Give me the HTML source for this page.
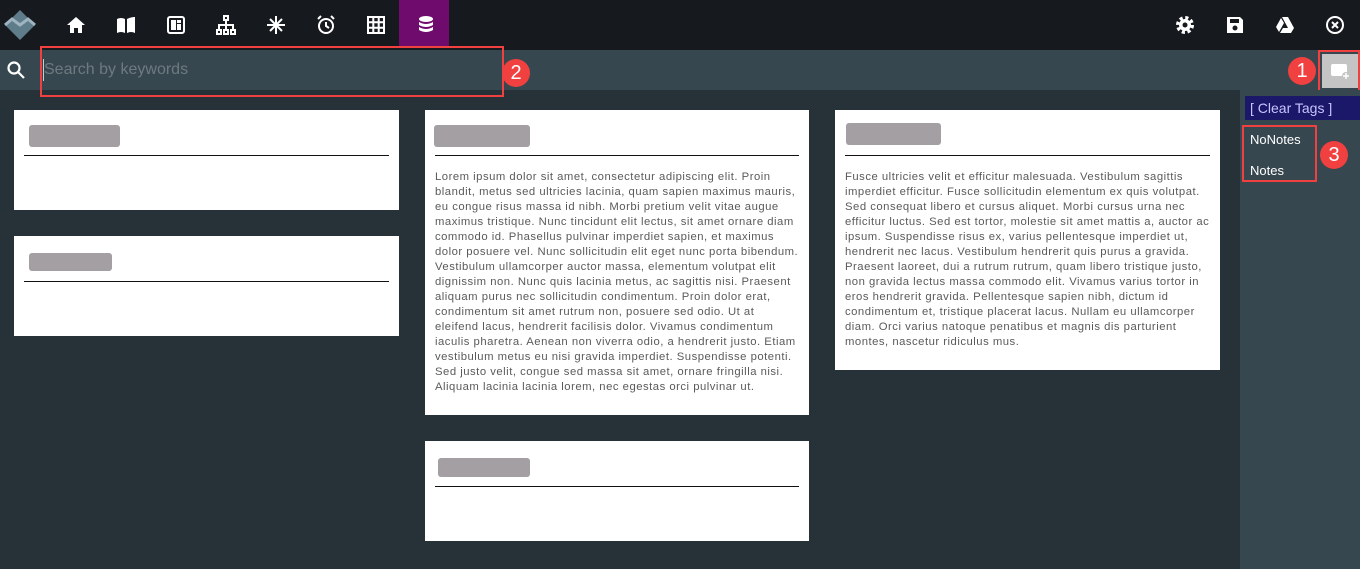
<!DOCTYPE html>
<html><head><meta charset="utf-8"><style>
*{box-sizing:border-box;margin:0;padding:0}
body{width:1360px;height:569px;background:#263238;font-family:"Liberation Sans",sans-serif;position:relative;overflow:hidden}
.top{position:absolute;left:0;top:0;width:1360px;height:50px;background:#161a1f}
.ic{position:absolute;top:13px;width:24px;height:24px}
.sb{position:absolute;left:0;top:50px;width:1360px;height:40px;background:#37474f}
.side{position:absolute;left:1240px;top:90px;width:120px;height:479px;background:#37474f}
.card{position:absolute;background:#fff}
.card .t{position:absolute;left:9px;top:15px;height:22px;background:#a39fa3;border-radius:3px}
.card .hr{position:absolute;left:10px;right:10px;top:45px;height:1px;background:#111}
.card p{position:absolute;left:10px;right:8px;top:60px;font-size:11.3px;line-height:15px;color:#5a5a5a;letter-spacing:0.5px}
.red{position:absolute;border:2px solid #f04040}
.num{position:absolute;width:28px;height:28px;border-radius:50%;background:#f0403f;color:#fff;font-size:20px;text-align:center;line-height:28px}
</style></head><body>
<div class="top">
<svg style="position:absolute;left:4px;top:9px" width="32" height="32" viewBox="0 0 32 32"><path d="M16 1 L31 16 L16 31 L1 16Z" fill="#5f7c8a"/><path d="M1 16 L8 10 L16 16 L24 10 L31 16" fill="none" stroke="#9eb4c0" stroke-width="3"/></svg>
<svg class="ic" style="left:64px" viewBox="0 0 24 24"><path d="M12 4 L3 12 H6 V20 H10 V15 H14 V20 H18 V12 H21Z" fill="#fff"/></svg>
<svg class="ic" style="left:114px" viewBox="0 0 24 24"><path d="M3 6 Q7 4 11 6 V20 Q7 18 3 20Z M13 6 Q17 4 21 4 V20 Q17 18 13 20Z" fill="#fff"/></svg>
<svg class="ic" style="left:164px" viewBox="0 0 24 24"><rect x="4" y="4" width="16" height="16" rx="2" fill="none" stroke="#fff" stroke-width="2"/><rect x="7" y="7" width="5" height="10" fill="#fff"/><rect x="13" y="7" width="4" height="3" fill="#fff"/><rect x="13" y="11" width="4" height="6" fill="#fff"/></svg>
<svg class="ic" style="left:214px" viewBox="0 0 24 24" fill="none" stroke="#fff" stroke-width="2"><rect x="10" y="3" width="4" height="4"/><rect x="3" y="17" width="4" height="4"/><rect x="10" y="17" width="4" height="4"/><rect x="17" y="17" width="4" height="4"/><path d="M12 7V17M5 17V12H19V17"/></svg>
<svg class="ic" style="left:264px" viewBox="0 0 24 24" stroke="#fff" stroke-width="2"><path d="M12 3V21M3 12H21M6 6L18 18M18 6L6 18"/></svg>
<svg class="ic" style="left:314px" viewBox="0 0 24 24" fill="none" stroke="#fff" stroke-width="2"><circle cx="12" cy="13" r="7"/><path d="M12 9V13L15 15M4 6L7 3M20 6L17 3"/></svg>
<svg class="ic" style="left:364px" viewBox="0 0 24 24" fill="none" stroke="#fff" stroke-width="2"><rect x="4" y="4" width="16" height="16"/><path d="M9.3 4V20M14.7 4V20M4 9.3H20M4 14.7H20"/></svg>
<div style="position:absolute;left:399px;top:0;width:50px;height:46px;background:#700b6e"></div>
<svg class="ic" style="left:414px" viewBox="0 0 24 24" fill="#fff"><ellipse cx="12" cy="6" rx="7" ry="3"/><path d="M5 9 Q12 13 19 9 V12 Q12 16 5 12Z M5 14 Q12 18 19 14 V17 Q12 21 5 17Z"/></svg>
<svg class="ic" style="left:1173px" viewBox="0 0 24 24"><circle cx="12" cy="12" r="7" fill="none" stroke="#fff" stroke-width="4" stroke-dasharray="3 2.5"/><circle cx="12" cy="12" r="6" fill="#fff"/><circle cx="12" cy="12" r="2.5" fill="#161a1f"/></svg>
<svg class="ic" style="left:1223px" viewBox="0 0 24 24"><path d="M4 4H17L20 7V20H4Z" fill="#fff"/><rect x="7" y="6" width="9" height="4" fill="#161a1f"/><circle cx="12" cy="15" r="2.5" fill="#161a1f"/></svg>
<svg class="ic" style="left:1273px" viewBox="0 0 24 24" fill="#fff"><path d="M9 4H15L21 15H15Z M8 5L11 10L6 19L3 14Z M7 20L10 15H21L18 20Z"/></svg>
<svg class="ic" style="left:1323px" viewBox="0 0 24 24" fill="none" stroke="#fff" stroke-width="2"><circle cx="12" cy="12" r="8"/><path d="M9 9L15 15M15 9L9 15"/></svg>
</div>
<div class="sb">
<svg style="position:absolute;left:6px;top:10px" width="20" height="20" viewBox="0 0 20 20" fill="none" stroke="#fff" stroke-width="2.2"><circle cx="8" cy="8" r="5.5"/><path d="M12 12L18 18"/></svg>
<div style="position:absolute;left:44px;top:11px;font-size:16px;color:#6d7a80">Search by keywords</div>
<div style="position:absolute;left:43px;top:9px;width:1px;height:22px;background:#ccc"></div>
<div style="position:absolute;left:1322px;top:4px;width:36px;height:34px;background:#c4c4c4"></div>
<svg style="position:absolute;left:1329px;top:12px" width="22" height="18" viewBox="0 0 22 18"><rect x="2" y="2" width="16" height="12" rx="2" fill="#fff"/><circle cx="17" cy="14" r="4" fill="#c4c4c4"/><path d="M17 11V17M14 14H20" stroke="#fff" stroke-width="1.5"/></svg>
</div>
<div class="red" style="left:40px;top:46px;width:464px;height:51px"></div>
<div class="num" style="left:502px;top:59px">2</div>
<div class="red" style="left:1318px;top:50px;width:42px;height:42px"></div>
<div class="num" style="left:1288px;top:57px">1</div>
<div class="side">
<div style="position:absolute;left:5px;top:6px;width:115px;height:24px;background:#1b1769;color:#c9c4ff;font-size:14px;line-height:24px;padding-left:5px">[ Clear Tags ]</div>
<div style="position:absolute;left:10px;top:42px;color:#fff;font-size:13px">NoNotes</div>
<div style="position:absolute;left:10px;top:73px;color:#fff;font-size:13px">Notes</div>
</div>
<div class="red" style="left:1242px;top:125px;width:75px;height:57px"></div>
<div class="num" style="left:1320px;top:141px">3</div>

<div class="card" style="left:14px;top:110px;width:385px;height:100px"><div class="t" style="left:15px;width:91px"></div><div class="hr"></div></div>
<div class="card" style="left:14px;top:236px;width:385px;height:100px"><div class="t" style="left:15px;width:83px;top:17px;height:18px"></div><div class="hr"></div></div>
<div class="card" style="left:425px;top:110px;width:384px;height:305px"><div class="t" style="width:96px"></div><div class="hr"></div><p>Lorem ipsum dolor sit amet, consectetur adipiscing elit. Proin blandit, metus sed ultricies lacinia, quam sapien maximus mauris, eu congue risus massa id nibh. Morbi pretium velit vitae augue maximus tristique. Nunc tincidunt elit lectus, sit amet ornare diam commodo id. Phasellus pulvinar imperdiet sapien, et maximus dolor posuere vel. Nunc sollicitudin elit eget nunc porta bibendum. Vestibulum ullamcorper auctor massa, elementum volutpat elit dignissim non. Nunc quis lacinia metus, ac sagittis nisi. Praesent aliquam purus nec sollicitudin condimentum. Proin dolor erat, condimentum sit amet rutrum non, posuere sed odio. Ut at eleifend lacus, hendrerit facilisis dolor. Vivamus condimentum iaculis pharetra. Aenean non viverra odio, a hendrerit justo. Etiam vestibulum metus eu nisi gravida imperdiet. Suspendisse potenti. Sed justo velit, congue sed massa sit amet, ornare fringilla nisi. Aliquam lacinia lacinia lorem, nec egestas orci pulvinar ut.</p></div>
<div class="card" style="left:425px;top:441px;width:384px;height:100px"><div class="t" style="left:13px;width:92px;top:17px;height:19px"></div><div class="hr"></div></div>
<div class="card" style="left:835px;top:110px;width:385px;height:260px"><div class="t" style="left:11px;width:95px;top:13px"></div><div class="hr"></div><p>Fusce ultricies velit et efficitur malesuada. Vestibulum sagittis imperdiet efficitur. Fusce sollicitudin elementum ex quis volutpat. Sed consequat libero et cursus aliquet. Morbi cursus urna nec efficitur luctus. Sed est tortor, molestie sit amet mattis a, auctor ac ipsum. Suspendisse risus ex, varius pellentesque imperdiet ut, hendrerit nec lacus. Vestibulum hendrerit quis purus a gravida. Praesent laoreet, dui a rutrum rutrum, quam libero tristique justo, non gravida lectus massa commodo elit. Vivamus varius tortor in eros hendrerit gravida. Pellentesque sapien nibh, dictum id condimentum et, tristique placerat lacus. Nullam eu ullamcorper diam. Orci varius natoque penatibus et magnis dis parturient montes, nascetur ridiculus mus.</p></div>
</body></html>
